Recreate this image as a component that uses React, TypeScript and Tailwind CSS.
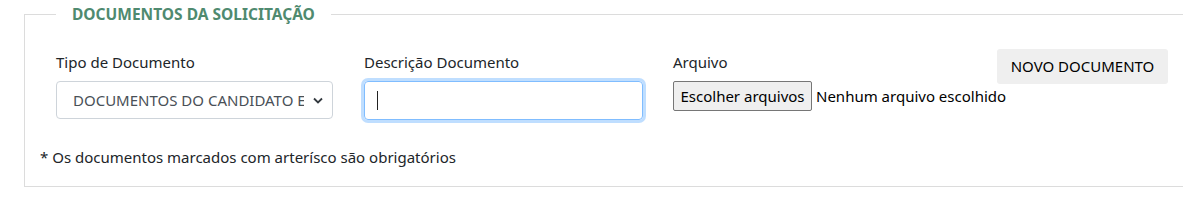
import React from 'react';

export default function App() {
    return (
        <div className="w-[1183px] h-[203px] bg-white pt-[4px] pl-[24px] font-['Noto_Sans',sans-serif] text-[#212529]">
            <fieldset className="border border-r-0 border-[#dcdcdc] h-[183px] pl-[31px] pr-0">
                <legend className="px-[16px] text-[15.5px] font-bold text-[#4f8a6f] leading-[20px]">
                    DOCUMENTOS DA SOLICITAÇÃO
                </legend>
                <div className="flex items-start pt-[28px]">
                    <div className="w-[277px] mr-[31px] shrink-0">
                        <label className="block text-[15px] leading-[20px] mb-[9px]">Tipo de Documento</label>
                        <div className="relative h-[38px] border border-[#ced4da] rounded-[4px] flex items-center pl-[16px] pr-[28px] overflow-hidden">
                            <span className="text-[15px] text-[#495057] whitespace-nowrap overflow-hidden">DOCUMENTOS DO CANDIDATO EM</span>
                            <svg className="absolute right-[9px] top-[15px]" width="10" height="7" viewBox="0 0 10 7">
                                <path d="M1 1.5 L5 5.5 L9 1.5" fill="none" stroke="#343a40" strokeWidth="1.8" />
                            </svg>
                        </div>
                    </div>
                    <div className="w-[279px] mr-[30px] shrink-0">
                        <label className="block text-[15px] leading-[20px] mb-[9px]">Descrição Documento</label>
                        <div className="h-[39px] border border-[#80bdff] rounded-[4px] shadow-[0_0_0_3px_rgba(0,123,255,0.25)] flex items-center pl-[12px]">
                            <div className="w-px h-[19px] bg-[#222]" />
                        </div>
                    </div>
                    <div className="w-[324px] shrink-0">
                        <label className="block text-[15px] leading-[20px] mb-[9px]">Arquivo</label>
                        <div className="flex items-center whitespace-nowrap">
                            <button className="shrink-0 w-[139px] h-[30px] border border-[#767676] rounded-[2px] bg-[#efefef] text-[15px] text-black whitespace-nowrap">Escolher arquivos</button>
                            <span className="shrink-0 ml-[4px] text-[15px] text-black">Nenhum arquivo escolhido</span>
                        </div>
                    </div>
                    <button className="shrink-0 -mt-[3px] w-[171px] h-[35px] bg-[#efefef] rounded-[3px] text-[15px] text-black whitespace-nowrap">NOVO DOCUMENTO</button>
                </div>
                <p className="mt-[27px] -ml-[16px] text-[15px] leading-[20px]">* Os documentos marcados com arterísco são obrigatórios</p>
            </fieldset>
        </div>
    );
}
